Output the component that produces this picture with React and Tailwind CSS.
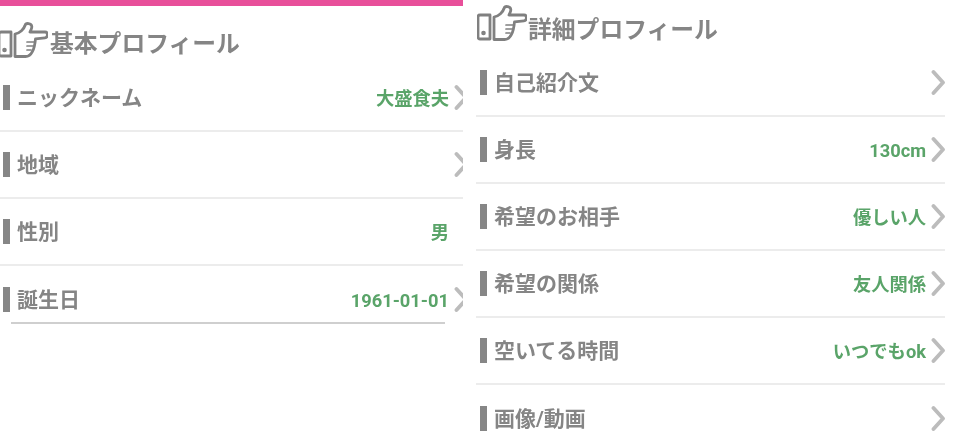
const font = { fontFamily: 'Roboto, "Noto Sans CJK JP", "Noto Sans", sans-serif' }

function Hand({ className }) {
  return (
    <svg className={className} viewBox="0 0 50 37" fill="none" stroke="#808080" strokeWidth="2.800" strokeLinejoin="round" strokeLinecap="round">
      {/* cuff */}
      <path d="M3 11h10v24H3a2 2 0 0 1-2-2V13a2 2 0 0 1 2-2z" />
      <circle cx="6.500" cy="29" r="0.9" fill="#808080" />
      {/* thumb, pointing finger and palm */}
      <path d="M17 13c5-1 9-5 10-8.500.7-3 6.500-2.600 6.800 1 .2 2-.8 3-1.800 5.500h15c3.200 0 3.200 5.600 0 5.800l-9.500 1c-.5 5-1 9-3 12.500-1.500 3-3.500 5.200-7 5.200H17z" />
      <path d="M29 21h7M29 25h6M29 29h4" strokeWidth="1.700" />
    </svg>
  )
}

function Chevron() {
  return (
    <svg className="w-[14px] h-[27px] shrink-0" viewBox="0 0 14 27" fill="none" stroke="#bcbcbc" strokeWidth="3.800" strokeLinecap="round" strokeLinejoin="round">
      <path d="M2.500 3l9.500 10.500-9.500 10.500" />
    </svg>
  )
}

function Row({ label, value, chevron = true, last, className }) {
  return (
    <div className={`flex items-center h-[67px] ${className} ${last ? '' : 'border-b-2 border-[#ececec]'}`}>
      <span className="w-[7px] h-[25px] bg-[#868686] shrink-0" />
      <span className="ml-[7px] pt-[3px] text-[21px] font-bold text-[#858585]">{label}</span>
      <span className="ml-auto pt-[3px] text-[18.300px] font-bold text-[#5aa469]">{value}</span>
      <span className="w-[14px] ml-[5px] shrink-0">{chevron && <Chevron />}</span>
    </div>
  )
}

export default function App() {
  return (
    <div className="w-[961px] h-[441px] overflow-hidden bg-white flex blur-[0.4px]" style={font}>
      {/* Basic profile */}
      <div className="w-[463px] shrink-0 overflow-hidden">
        <div className="h-[6px] bg-[#e84f9a]" />
        <div className="h-[59px] pt-[18px] flex items-center -ml-[2px]">
          <Hand className="w-[50px] h-[37px] shrink-0 -mt-[11px]" />
          <h2 className="ml-[2px] text-[23.800px] font-bold text-[#858585]">基本プロフィール</h2>
        </div>
        <div className="w-[468px]">
          <Row className="pl-[3px]" label="ニックネーム" value="大盛食夫" />
          <Row className="pl-[3px]" label="地域" value="" />
          <Row className="pl-[3px]" label="性別" value="男" chevron={false} />
          <Row className="pl-[3px]" label="誕生日" value="1961-01-01" last />
        </div>
        <div className="h-[2px] -mt-[11px] ml-[11px] w-[434px] bg-[#cfcfcf]" />
      </div>

      {/* Detail profile */}
      <div className="ml-[13px] w-[469px] shrink-0">
        <div className="h-[50px] pt-[12px] flex items-center">
          <Hand className="w-[50px] h-[37px] shrink-0 ml-[1px] -mt-[17px]" />
          <h2 className="ml-[1px] text-[23.800px] font-bold text-[#858585]">詳細プロフィール</h2>
        </div>
        <div>
          <Row className="pl-[4px]" label="自己紹介文" value="" />
          <Row className="pl-[4px]" label="身長" value="130cm" />
          <Row className="pl-[4px]" label="希望のお相手" value="優しい人" />
          <Row className="pl-[4px]" label="希望の関係" value="友人関係" />
          <Row className="pl-[4px]" label="空いてる時間" value="いつでもok" />
          <Row className="pl-[4px]" label="画像/動画" value="" last />
        </div>
      </div>
    </div>
  )
}
